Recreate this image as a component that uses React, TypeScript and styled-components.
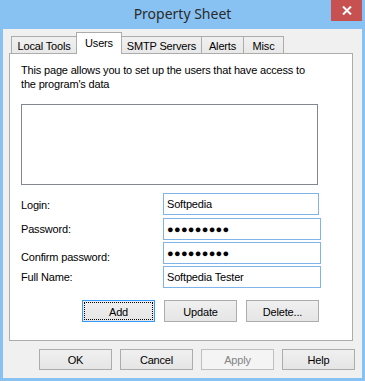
import React from 'react';
import styled, {createGlobalStyle, css} from 'styled-components';

const GlobalStyle = createGlobalStyle`
	html, body {
		margin: 0;
		padding: 0;
		background: #ffffff;
	}
	body {
		font-family: "Liberation Sans", Arial, sans-serif;
		font-size: 11px;
		letter-spacing: -0.17px;
		color: #000000;
	}
`;

const Window = styled.div`
	width: 365px;
	height: 381px;
	box-sizing: border-box;
	background: #88c2f2;
	padding: 0 3px 3px 3px;
	display: flex;
	flex-direction: column;
`;

const TitleBar = styled.div`
	height: 29px;
	display: grid;
	grid-template-columns: 1fr auto 1fr;
	align-items: start;
`;

const Title = styled.div`
	grid-column: 2;
	font-family: "Noto Sans", "Open Sans", sans-serif;
	font-size: 14px;
	letter-spacing: 0;
	line-height: 28px;
	color: #2b2b2b;
`;

const CloseButton = styled.div`
	grid-column: 3;
	justify-self: end;
	width: 31px;
	height: 21px;
	background: #c75050;
	display: flex;
	align-items: center;
	justify-content: center;
`;

const Client = styled.div`
	flex: 1;
	background: #f0f0f0;
	padding: 4px 9px 8px 6px;
	display: flex;
	flex-direction: column;
`;

const TabStrip = styled.div`
	height: 20px;
	display: flex;
	align-items: flex-end;
	padding-left: 2px;
`;

const Tab = styled.div<{$width: number; $active?: boolean}>`
	width: ${(p) => p.$width}px;
	height: 17px;
	box-sizing: border-box;
	border: 1px solid #acacac;
	border-bottom: none;
	background: linear-gradient(#f0f0f0, #e8e8e8);
	display: flex;
	align-items: center;
	justify-content: center;
	padding-top: 1px;
	& + & {
		margin-left: -1px;
	}
	${(p) =>
		p.$active &&
		css`
			height: 22px;
			margin-bottom: -1px;
			background: #ffffff;
			position: relative;
			z-index: 1;
			padding-bottom: 3px;
		`}
`;

const Panel = styled.div`
	flex: 1;
	border: 1px solid #acacac;
	background: #ffffff;
	padding: 9px 11px 0 11px;
	display: flex;
	flex-direction: column;
	align-items: flex-start;
`;

const Description = styled.p`
	margin: 0;
	line-height: 14px;
`;

const ListBox = styled.div`
	margin-top: 13px;
	width: 297px;
	height: 81px;
	box-sizing: border-box;
	border: 1px solid #828790;
	background: #ffffff;
`;

const Form = styled.div`
	margin-top: 8px;
	display: grid;
	grid-template-columns: 142px auto;
	row-gap: 2px;
	align-items: center;
`;

const Label = styled.label<{$drop?: number}>`
	padding-top: ${(p) => p.$drop ?? 0}px;
`;

const Field = styled.input<{$width: number; $dots?: boolean}>`
	width: ${(p) => p.$width}px;
	height: 22px;
	box-sizing: border-box;
	margin: 0;
	border: 1px solid #7eb4ea;
	background: #ffffff;
	padding: 0 3px;
	font-family: "Liberation Sans", Arial, sans-serif;
	font-size: 11px;
	letter-spacing: -0.17px;
	color: #000000;
	outline: none;
	&:first-of-type {
		margin-bottom: 1px;
	}
	${(p) =>
		p.$dots &&
		css`
			letter-spacing: 0.3px;
		`}
`;

const PanelButtons = styled.div`
	margin-top: 12px;
	padding-left: 61px;
	display: flex;
	gap: 9px;
`;

const Button = styled.button<{$default?: boolean; $height?: number}>`
	width: 73px;
	height: ${(p) => p.$height ?? 21}px;
	box-sizing: border-box;
	margin: 0;
	padding: 1px 0 0 0;
	border: 1px solid #acacac;
	background: linear-gradient(#f0f0f0, #e5e5e5);
	font-family: "Liberation Sans", Arial, sans-serif;
	font-size: 11px;
	letter-spacing: -0.17px;
	color: #000000;
	&:disabled {
		border-color: #bfbfbf;
		background: #f4f4f4;
		color: #838383;
	}
	${(p) =>
		p.$default &&
		css`
			border-color: #3399ff;
			outline: 1px dotted #000000;
			outline-offset: -3px;
		`}
`;

const Footer = styled.div`
	margin-top: 8px;
	margin-right: -2px;
	display: flex;
	justify-content: flex-end;
	gap: 8px;
`;

const tabs = [
	{label: 'Local Tools', width: 66},
	{label: 'Users', width: 46, active: true},
	{label: 'SMTP Servers', width: 81},
	{label: 'Alerts', width: 43},
	{label: 'Misc', width: 41},
];

export default function App() {
	return (
		<>
			<GlobalStyle />
			<Window>
				<TitleBar>
					<Title>Property Sheet</Title>
					<CloseButton>
						<svg width="10" height="9" viewBox="0 0 10 9">
							<path d="M1 0.5 L9 8.5 M9 0.5 L1 8.5" stroke="#ffffff" strokeWidth="2" />
						</svg>
					</CloseButton>
				</TitleBar>
				<Client>
					<TabStrip>
						{tabs.map((t) => (
							<Tab key={t.label} $width={t.width} $active={t.active}>
								{t.label}
							</Tab>
						))}
					</TabStrip>
					<Panel>
						<Description>
							This page allows you to set up the users that have access to
							<br />
							the program's data
						</Description>
						<ListBox />
						<Form>
							<Label>Login:</Label>
							<Field $width={156} readOnly value="Softpedia" />
							<Label>Password:</Label>
							<Field $width={158} $dots readOnly value="●●●●●●●●●" />
							<Label $drop={7}>Confirm password:</Label>
							<Field $width={158} $dots readOnly value="●●●●●●●●●" />
							<Label>Full Name:</Label>
							<Field $width={158} readOnly value="Softpedia Tester" />
						</Form>
						<PanelButtons>
							<Button $default $height={22}>Add</Button>
							<Button $height={22}>Update</Button>
							<Button $height={22}>Delete...</Button>
						</PanelButtons>
					</Panel>
					<Footer>
						<Button>OK</Button>
						<Button>Cancel</Button>
						<Button disabled>Apply</Button>
						<Button>Help</Button>
					</Footer>
				</Client>
			</Window>
		</>
	);
}
